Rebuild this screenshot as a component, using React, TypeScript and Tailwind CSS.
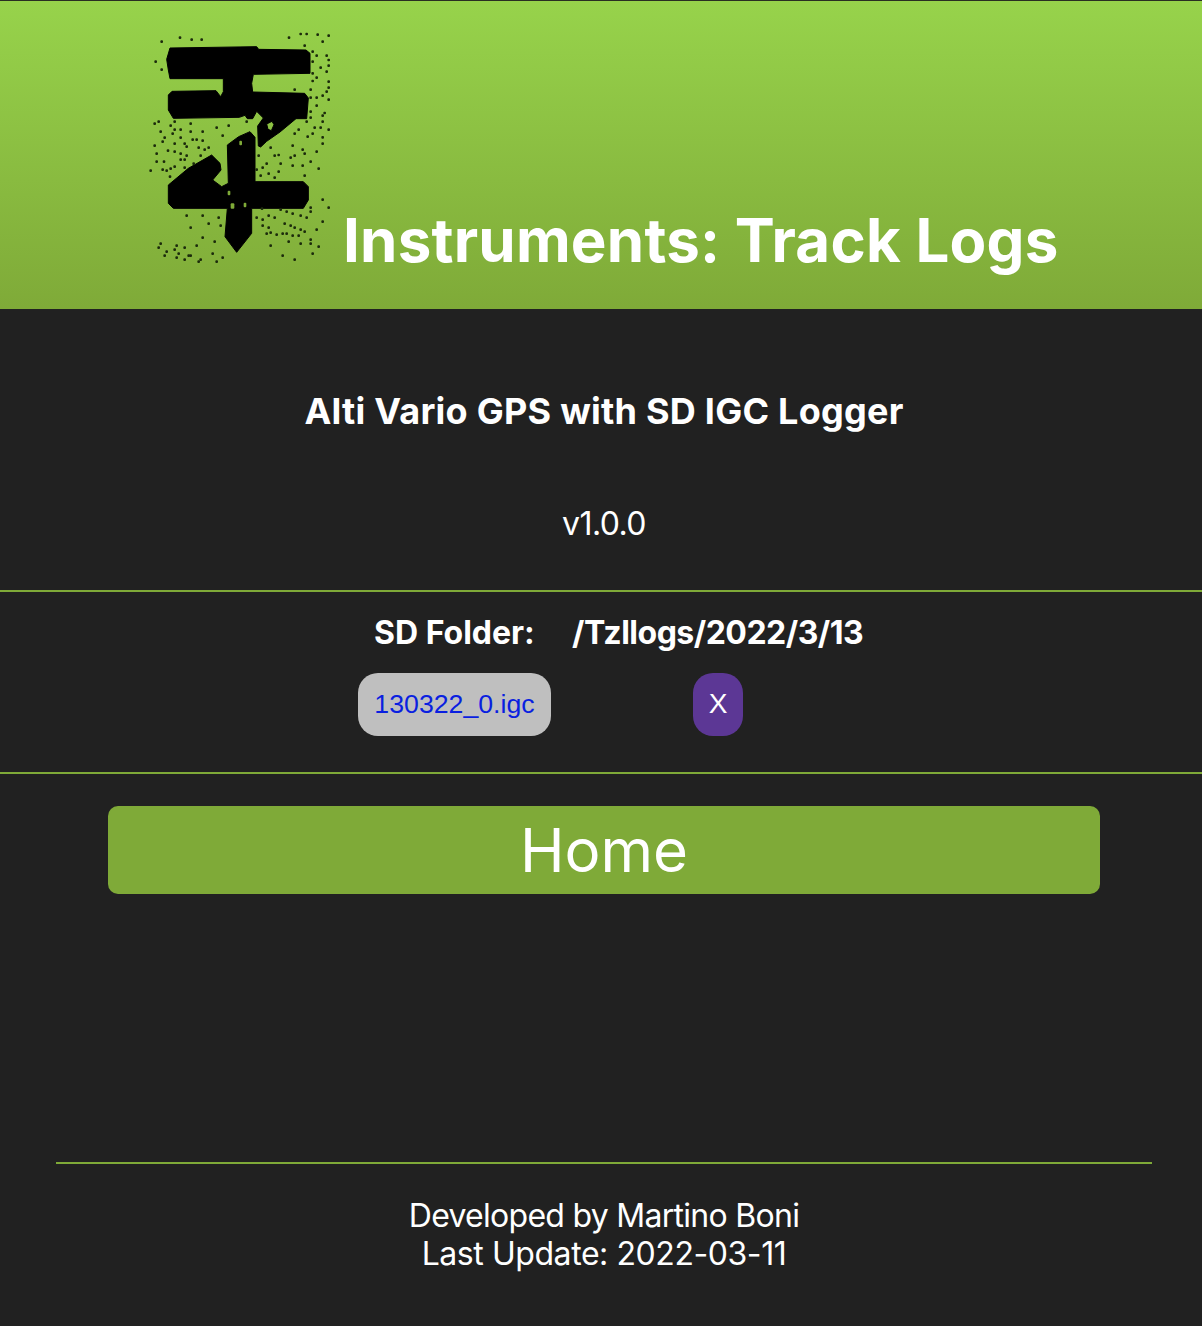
const LOGO_DOTS = [
  [65, 65], [120, 53], [155, 59], [185, 59], [47, 125], [65, 149], [447, 53], [482, 42], [500, 42], [533, 44], [566, 47], [548, 65],
  [494, 77], [518, 95], [530, 107], [560, 107], [566, 120], [518, 125], [542, 143], [566, 137], [560, 155], [518, 160], [530, 173], [518, 183],
  [566, 185], [566, 203], [560, 215], [512, 209], [464, 209], [548, 227], [530, 233], [512, 233], [566, 239], [530, 257], [512, 275], [554, 279],
  [548, 287], [512, 293], [500, 305], [548, 305], [524, 323], [542, 323], [566, 329], [476, 329], [464, 341], [518, 341], [503, 350], [548, 352],
  [548, 371], [458, 377], [392, 383], [488, 389], [494, 401], [530, 395], [416, 405], [404, 407], [356, 407], [464, 407], [452, 413], [512, 425],
  [422, 431], [380, 431], [368, 443], [350, 449], [458, 437], [488, 437], [536, 446], [416, 455], [386, 461], [362, 467], [404, 473], [494, 467],
  [44, 311], [56, 305], [92, 317], [104, 305], [152, 311], [104, 329], [122, 329], [98, 341], [122, 353], [152, 335], [188, 335], [230, 323],
  [266, 317], [248, 347], [320, 305], [62, 335], [74, 353], [68, 365], [44, 377], [158, 359], [170, 359], [188, 362], [104, 371], [134, 371],
  [140, 380], [176, 383], [194, 389], [206, 383], [84, 392], [104, 395], [50, 401], [122, 401], [140, 407], [182, 407], [50, 425], [72, 425],
  [122, 419], [134, 419], [104, 440], [92, 446], [80, 452], [68, 449], [32, 452], [134, 443], [161, 431], [90, 470],
  [140, 587], [188, 587], [206, 611], [236, 593], [242, 617], [152, 623], [188, 653], [224, 665], [62, 671], [56, 683], [110, 677], [134, 683],
  [170, 677], [80, 695], [104, 689], [116, 701], [74, 707], [110, 713], [134, 719], [146, 707], [152, 707], [182, 719], [176, 725], [218, 701],
  [248, 713], [230, 725], [350, 593], [368, 599], [386, 587], [404, 593], [368, 617], [386, 623], [434, 611], [452, 617], [464, 623], [482, 629],
  [494, 635], [530, 629], [548, 605], [380, 641], [392, 638], [410, 644], [428, 641], [440, 641], [458, 647], [476, 647], [512, 659], [512, 671],
  [482, 671], [446, 665], [392, 677], [536, 680], [518, 701], [428, 707], [464, 719], [422, 569], [440, 575], [458, 581], [482, 587], [500, 593],
  [512, 563], [512, 575], [548, 539], [566, 563], [366, 566],
];

function Logo() {
  return (
    <svg width="200" height="250" viewBox="0 0 600 750" className="shrink-0">
      <path
        fill="#000"
        stroke="#000"
        strokeWidth="3"
        strokeLinejoin="round"
        fillRule="evenodd"
        d="M90 84 L350 80 L356 88 L498 90 L510 100 L510 160 L340 163 L335 190 L338 216 L494 220 L505 234 L500 296 L468 296 L420 336 L380 364 L362 381 L355 378 L353 318 L370 294 L350 274 L338 296 L322 296 L315 286 L298 292 L100 295 L85 270 L85 225 L96 214 L228 212 L242 230 L250 215 L250 176 L150 176 L90 176 L85 150 L80 118 Z M380 312 L396 304 L402 314 L394 332 L384 328 Z"
      />
      <path
        fill="#000"
        stroke="#000"
        strokeWidth="3"
        strokeLinejoin="round"
        d="M262 375 L296 350 L330 335 L345 352 L345 485 L490 485 L505 500 L505 540 L490 565 L335 565 L335 640 L290 697 L255 650 L262 565 L100 565 L85 550 L85 495 L145 445 L215 405 L240 430 L243 450 L218 480 L245 500 L265 490 Z"
      />
      <g fill="#7faa38">
        <rect x="298" y="362" width="8" height="14" rx="3" />
        <rect x="263" y="512" width="8" height="14" rx="3" />
        <rect x="272" y="550" width="11" height="16" rx="3" />
        <rect x="311" y="548" width="8" height="14" rx="3" />
      </g>
      {LOGO_DOTS.map(([x, y]) => (
        <rect key={`${x}-${y}`} x={x - 4} y={y - 4} width="8" height="8" rx="3" fill="#1c2b0c" />
      ))}
    </svg>
  );
}

export default function App() {
  return (
    <div className="w-[1202px] h-[1326px] overflow-hidden bg-[#212121] text-white font-['Inter',sans-serif]">
      <div className="w-[1208px]">
        <header className="h-[309px] border-t border-[#2a2f22] bg-gradient-to-b from-[#97d34b] to-[#7faa38] flex items-start pl-[140px] pt-[19px]">
          <Logo />
          <h1 className="text-[60px] leading-[72px] font-bold tracking-[0.22px] mt-[184px] ml-[3px] whitespace-nowrap">Instruments: Track Logs</h1>
        </header>

        <div className="text-center h-[283px] border-b-2 border-[#7faa38]">
          <h2 className="pt-[80px] text-[36px] leading-[44px] font-bold tracking-[0.25px]">Alti Vario GPS with SD IGC Logger</h2>
          <p className="mt-[72px] text-[32px] leading-[38px] tracking-[-0.6px]">v1.0.0</p>
        </div>

        <div className="h-[182px] border-b-2 border-[#7faa38]">
          <div className="flex pt-[22px] text-[32px] leading-[38px] font-bold">
            <span className="w-[572px] pl-[374px] whitespace-nowrap">SD Folder:</span>
            <span className="whitespace-nowrap tracking-[-0.5px]">/Tzllogs/2022/3/13</span>
          </div>
          <div className="flex mt-[21px] pl-[358px]">
            <a className="w-[193px] h-[63px] rounded-[20px] bg-[#bfbfbf] flex items-center justify-center text-[#0a1fe0] text-[26.7px] font-['Liberation_Sans',sans-serif]">
              130322_0.igc
            </a>
            <button className="ml-[142px] w-[50px] h-[63px] pb-[2px] rounded-[20px] bg-[#5c3795] text-white text-[28px] font-['Liberation_Sans',sans-serif]">
              X
            </button>
          </div>
        </div>

        <div className="px-[108px] pt-[32px]">
          <button className="w-full h-[88px] rounded-[10px] bg-[#7faa38] text-white text-[60px] leading-[88px]">Home</button>
        </div>

        <footer className="mx-[56px] mt-[268px] border-t-2 border-[#7faa38] pt-[33px] text-center text-[32px] leading-[38px]">
          <p className="tracking-[-0.72px]">Developed by Martino Boni</p>
          <p className="tracking-[-0.43px]">Last Update: 2022-03-11</p>
        </footer>
      </div>
    </div>
  );
}
